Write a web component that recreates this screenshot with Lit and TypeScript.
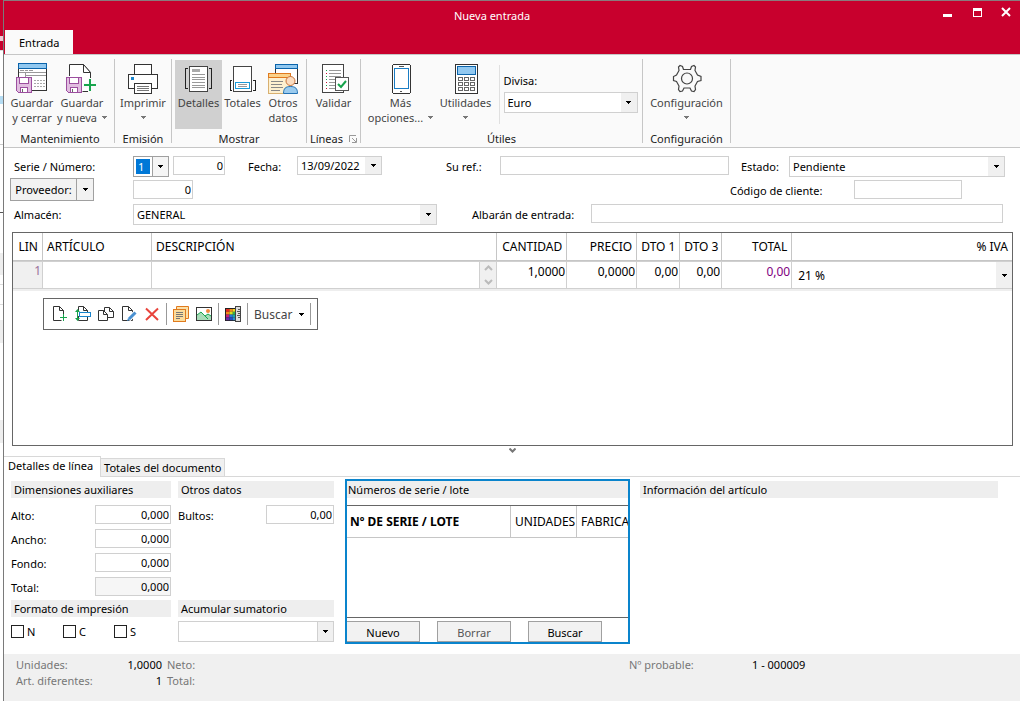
import { LitElement, html, css, svg } from "lit";
import { customElement, property } from "lit/decorators.js";

const base = css`
  * { box-sizing: border-box; }
  button, input, select { font: inherit; color: inherit; margin: 0; padding: 0; border-radius: 0; outline: none; }
  svg { display: block; flex: none; }
`;

const arrow = (fill = "#000") => svg`<svg width="5" height="3" shape-rendering="crispEdges"><path fill=${fill} d="M0 0h5v1H4v1H3v1H2V2H1V1H0z"/></svg>`;

const floppy = svg`
  <path d="M0.500 15.500h15v15h-13l-2-2z" fill="#e1bee0" stroke="#9c4f9f"/>
  <rect x="3.500" y="15.500" width="9" height="6" fill="#fff" stroke="#9c4f9f"/>
  <rect x="4.500" y="25.500" width="7" height="5" fill="#fff" stroke="#9c4f9f"/>
  <rect x="6" y="27" width="1" height="3" fill="#666"/>`;

const icons: Record<string, unknown> = {
  saveClose: svg`
    <rect x="2.500" y="1.500" width="28" height="27" fill="#fff" stroke="#333"/>
    <rect x="2.500" y="1.500" width="28" height="5" fill="#91c8f0" stroke="#0b64ab"/>
    <path d="M4 8.500h4m1 0h3m1 0h4M3 10.500h27M9.500 11v4M10 13.500h20" stroke="#999" fill="none"/>
    <path d="M18 18.500h2m1 0h2m1 0h2m1 0h2M18 21.500h2m1 0h2m1 0h2m1 0h2M18 24.500h2m1 0h2m1 0h2m1 0h2" stroke="#aaa"/>
    ${floppy}`,
  saveNew: svg`
    <path d="M3.500 14V2.500h14l7 8v19h-8" fill="#fff" stroke="#333" shape-rendering="auto"/>
    <path d="M17.500 2.500v8h7z" fill="#fff" stroke="#333" shape-rendering="auto"/>
    ${floppy}
    <path d="M24 16v14M17 23h14" stroke="#fafafa" stroke-width="5"/>
    <path d="M24 17v12M18 23h12" stroke="#17a44c" stroke-width="2"/>`,
  print: svg`
    <rect x="7.500" y="2.500" width="17" height="10" fill="#fff" stroke="#333"/>
    <rect x="1.500" y="12.500" width="29" height="14" rx="1" fill="#fff" stroke="#333"/>
    <rect x="4" y="15" width="3" height="3" fill="#1a84cc"/>
    <rect x="7.500" y="21.500" width="17" height="10" fill="#fff" stroke="#333"/>
    <path d="M10 24.500h12M10 26.500h12M10 28.500h12" stroke="#777"/>`,
  details: svg`
    <rect x="6.500" y="4.500" width="18" height="25" fill="#fff" stroke="#444"/>
    <path d="M5 6.500H2.500v20H5M26 6.500h2.500v20H26" fill="none" stroke="#222"/>
    <rect x="9" y="7" width="8" height="3" fill="#aaa"/>
    <path d="M9 12.500h13M9 15.500h13M9 17.500h13M9 20.500h13M9 23.500h13M9 25.500h13" stroke="#999"/>`,
  totals: svg`
    <rect x="6.500" y="4.500" width="18" height="25" fill="#fff" stroke="#444"/>
    <path d="M5 18.500H3.500v10H5M26 18.500h2.500v10H26" fill="none" stroke="#222"/>
    <rect x="8.500" y="20.500" width="14" height="6" fill="#fff" stroke="#1a9ad8"/>
    <path d="M11 22.500h9M11 24.500h9" stroke="#999"/>`,
  other: svg`
    <rect x="8.500" y="2.500" width="22" height="19" fill="#fff" stroke="#333"/>
    <rect x="8.500" y="2.500" width="22" height="4" fill="#91c8f0" stroke="#0b64ab"/>
    <rect x="1.500" y="11.500" width="22" height="20" fill="#fdf0d0" stroke="#d8b070"/>
    <rect x="1.500" y="11.500" width="22" height="4" fill="#fbd28a" stroke="#e07a1e"/>
    <path d="M4 19.500h12M4 22.500h11M4 25.500h12M4 28.500h9" stroke="#888"/>
    <path d="M16.500 31.500c0-5 2-7 7-7s7 2 7 7z" fill="#9bcbee" stroke="#2472b3" shape-rendering="auto"/>
    <circle cx="23.500" cy="19" r="4.500" fill="#fbdcc0" stroke="#c8743c" shape-rendering="auto"/>`,
  validate: svg`
    <rect x="4.500" y="2.500" width="21" height="28" fill="#fff" stroke="#444"/>
    <path d="M11 8.500h12M11 11.500h12M11 14.500h12M11 17.500h6M11 20.500h6M11 23.500h6M11 26.500h6" stroke="#999"/>
    <path d="M8 8.500h1M8 14.500h1M8 17.500h1M8 23.500h1" stroke="#17a44c"/>
    <path d="M8 11.500h1M8 20.500h1M8 26.500h1" stroke="#c8102e"/>
    <rect x="17.500" y="15.500" width="13" height="13" fill="#fff" stroke="#555"/>
    <path d="M20 22l3 3 5-6" fill="none" stroke="#17a44c" stroke-width="2" shape-rendering="auto"/>`,
  phone: svg`
    <rect x="7.500" y="2.500" width="18" height="29" rx="2" fill="#fff" stroke="#333"/>
    <rect x="9.500" y="6.500" width="14" height="20" fill="#fff" stroke="#1a7dc4"/>
    <path d="M14 4.500h5M15 29.500h2" stroke="#555"/>`,
  calc: svg`
    <rect x="5.500" y="2.500" width="22" height="29" fill="#fff" stroke="#333"/>
    <rect x="7.500" y="4.500" width="18" height="8" fill="#91c8f0" stroke="#0b64ab"/>
    ${[15.5, 20.5, 25.5].map((y) => [8.5, 14.5, 20.5].map((x) => svg`<rect x=${x} y=${y} width="4" height="3" fill="#fff" stroke="#666"/>`))}`,
  gear: svg`
    <g fill="none" stroke="#444" stroke-width="1.200" shape-rendering="auto">
      <path d="M12.500 7.500L11.500 4.500 9 3.500 7.500 5l.5 3.500L5.500 13 2.500 14.500v4L5.500 19.500 8 24l-.5 3.500L9 29.500l2.500-.500 1.500-3h6l1.500 3 2.500.500 1.500-2L24 24l2.500-4.500 3.500-1v-4L26.500 13 24 8.500l.5-3.500L23 3.500l-2.500 1-1 3z"/>
      <circle cx="16" cy="16.500" r="5.500"/>
    </g>`,
};

@customElement("combo-box")
class ComboBox extends LitElement {
  @property() value = "";
  @property() label = "";
  @property({ type: Boolean, reflect: true }) detached = false;
  @property({ type: Boolean, reflect: true }) picked = false;
  static styles = [base, css`
    :host { display: grid; grid-template-columns: minmax(0, 1fr) 16px; height: 21px; border: 1px solid #d0d0d0; background: #fff; }
    .field { grid-area: 1 / 1 / 2 / 3; width: 100%; min-width: 0; border: 0; background: none; appearance: none; padding: 0 18px 0 3px; }
    .arrow { grid-area: 1 / 2; background: #f0f0f0; display: grid; place-items: center; pointer-events: none; }
    :host([picked]) { border-color: #a0a0a0; }
    :host([picked]) .field { color: #fff; background: linear-gradient(#0078d7, #0078d7) 2px 2px / 14px 15px no-repeat; padding-left: 4px; }
    :host([picked]) .arrow { border-left: 1px solid #a0a0a0; background: #f5f5f5; }
    :host([detached]) .arrow { border-left: 1px solid #d0d0d0; }
  `];
  render() {
    return html`<select class="field" aria-label=${this.label}><option>${this.value}</option></select>
      <span class="arrow">${arrow()}</span>`;
  }
}

@customElement("ribbon-button")
class RibbonButton extends LitElement {
  @property() icon = "";
  @property() first = "";
  @property() second = "";
  @property({ type: Boolean }) menu = false;
  @property({ type: Boolean, reflect: true }) active = false;
  static styles = [base, css`
    :host { display: block; height: 69px; }
    .btn { width: 100%; height: 100%; border: 0; background: none; color: #444; line-height: 15px; display: flex; flex-direction: column; align-items: center; white-space: nowrap; }
    :host([active]) .btn { background: #d0d0d0; }
    .glyph { margin: 2px 0 1px; }
    .line { display: flex; align-items: center; gap: 5px; min-height: 15px; }
  `];
  render() {
    return html`<button class="btn" type="button" aria-pressed=${this.active}>
      <svg class="glyph" width="32" height="32" viewBox="0 0 32 32" shape-rendering="crispEdges">${icons[this.icon]}</svg>
      <span>${this.first}</span>
      <span class="line">${this.second ? html`<span>${this.second}</span>` : ""}${this.menu ? arrow("#777") : ""}</span>
    </button>`;
  }
}

@customElement("app-root")
class AppRoot extends LitElement {
  static styles = [base, css`
    :host { display: flex; min-height: 100vh; background: #fff; color: #000; font: 11px/15px "Noto Sans", "Open Sans", sans-serif; overflow: hidden; }
    .behind { width: 3px; flex: none; background: linear-gradient(#c8002d 36px, #f4c8d4 36px, #f4c8d4 41px, #c8002d 41px, #c8002d 50px, #ddd 50px, #ddd 51px, #fff 51px, #fff 96px, #b5dcf3 96px, #b5dcf3 104px, #fff 104px, #fff 144px, #ccc 144px, #ccc 145px, #fff 145px, #fff 212px, #555 212px, #555 213px, #fff 213px, #fff 253px, #eee 253px, #eee 275px, #fff 275px, #fff 284px, #ddd 284px, #ddd 285px, #fff 285px, #fff 304px, #ddd 304px, #ddd 305px, #fff 305px, #fff 320px, #eee 320px, #eee 343px, #fff 343px, #fff 420px, #eee 420px, #eee 443px, #fff 443px); }
    .window { flex: 1; min-width: 0; border-left: 1px solid #7a7a7a; border-top: 1px solid #8a7a7d; display: flex; flex-direction: column; }
    .title { height: 53px; background: #c8002d; color: #fff; display: grid; grid-template-columns: 1fr auto 1fr; padding-left: 1px; }
    .tab { align-self: end; justify-self: start; height: 24px; padding: 0 14px; background: #fafafa; color: #000; border: 0; }
    .caption { padding-top: 7px; margin-right: 41px; }
    .controls { justify-self: end; display: flex; height: 22px; }
    .controls button { width: 30px; border: 0; background: none; display: grid; place-items: center; }
    .controls button:last-child { width: 28px; }
    .ribbon { height: 94px; border-top: 1px solid #c6c6c6; border-bottom: 1px solid #c6c6c6; background: #fafafa; display: flex; padding: 4px 0; }
    .group { border-right: 1px solid #c6c6c6; display: flex; flex-direction: column; justify-content: space-between; align-items: center; color: #222; }
    .save { width: 111px; }
    .save .tools { align-self: flex-start; padding-left: 3px; }
    .save .foot { padding-left: 2px; }
    .emit { width: 57px; }
    .show { width: 135px; }
    .check { width: 54px; }
    .use { width: 282px; padding-left: 4px; }
    .use .foot { padding-right: 4px; }
    .setup { width: 88px; }
    .tools { display: flex; padding-top: 1px; }
    .w80 { width: 80px; }
    .w70 { width: 70px; }
    .w60 { width: 60px; }
    .w50 { width: 50px; }
    .w47 { width: 47px; }
    .w41 { width: 41px; }
    .w40 { width: 40px; }
    .foot { display: flex; align-items: center; gap: 6px; line-height: 9px; }
    .currency { border-left: 1px solid #e0e0e0; margin: 5px 0 5px 3px; padding: 8px 4px 0; display: grid; gap: 4px; align-content: start; width: 143px; color: #000; }

    .form { padding: 8px 15px 7px 6px; display: grid; gap: 3px; }
    .row { display: flex; align-items: flex-start; height: 21px; }
    .row label { line-height: 22px; flex: none; white-space: nowrap; }
    .lead { width: 123px; padding-left: 4px; }
    .box { height: 19px; border: 1px solid #d0d0d0; background: #fff; padding: 0 2px; min-width: 0; }
    .num { text-align: right; padding: 0 1px 1px; }
    .w36 { width: 36px; }
    .w52 { width: 52px; margin-left: 4px; }
    .row .date { width: 85px; height: 19px; }
    .lbl-date { width: 72px; padding-left: 23px; }
    .lbl-ref { width: 118px; padding-left: 64px; }
    .lbl-state { width: 60px; padding-left: 12px; }
    .state { flex: 1; }
    .ref { flex: 1; margin-right: 0; flex-basis: 15px; }
    .split { display: flex; height: 23px; width: 84px; flex: none; margin-top: -2px; }
    .split button { border: 1px solid #a0a0a0; background: #f2f2f2; }
    .split .main { flex: 1; }
    .split .drop { width: 17px; border-left: 0; display: grid; place-items: center; }
    .supplier { width: 60px; margin-left: 39px; }
    .lbl-code { margin-left: auto; width: 124px; }
    .code { width: 108px; margin-right: 43px; }
    .store { width: 304px; }
    .lbl-note { width: 154px; padding-left: 35px; }
    .note { flex: 1; margin-right: 2px; }

    .lines { border: 1px solid #666; margin: 0 7px 0 8px; flex: 1; min-height: 120px; }
    table { width: 100%; border-spacing: 0; table-layout: fixed; font-size: 12px; }
    .grid { border-bottom: 2px solid #eee; }
    .grid th { height: 28px; font-weight: 400; border-right: 1px solid #c6c6c6; border-bottom: 1px solid #c6c6c6; padding: 0 4px; text-align: right; white-space: nowrap; }
    .grid th.l { text-align: left; }
    .grid th:last-child { border-right: 0; }
    .grid td { height: 28px; border: 1px solid #d0d0d0; border-left-width: 0; padding: 0; vertical-align: top; }
    .grid td:last-child { border-right: 0; }
    .grid .no { background: #f0f0f0; color: #9a6f9a; text-align: right; padding: 1px; }
    .c-lin { width: 30px; }
    .c-art { width: 109px; }
    .c-num { width: 70px; }
    .c-dto { width: 43px; }
    .c-dto2 { width: 42px; }
    .c-iva { width: 22%; }
    .cell { width: 100%; height: 26px; border: 0; display: block; background: #fff; padding: 0 1px 8px; text-align: right; }
    .violet { color: #800080; }
    .desc { display: flex; }
    .spin { width: 17px; height: 26px; flex: none; background: #f0f0f0; border-left: 1px solid #d0d0d0; display: grid; place-items: center; }
    .grid combo-box { height: 26px; border: 0; padding-left: 3px; }
    .bar { width: 275px; height: 32px; margin: 7px 0 0 30px; border: 1px solid #666; display: flex; align-items: center; padding-left: 8px; gap: 7px; color: #444; font-size: 12px; }
    .bar button { border: 0; background: none; display: flex; align-items: center; gap: 7px; }
    .bar .icon { width: 16px; }
    .bar .sep { width: 1px; height: 22px; margin: 0 -1px; background: #999; }

    .fold { height: 10px; border: 0; background: none; display: grid; place-items: center; padding-bottom: 2px; }
    .tabs { display: flex; align-items: flex-end; height: 21px; }
    .tabs button { border: 1px solid #d8d8d8; border-left: 0; background: #f0f0f0; height: 19px; padding: 0 3px; white-space: nowrap; }
    .tabs .on { border-bottom: 0; background: #fff; height: 21px; padding: 0 7px 3px 4px; }
    .tabs .rest { flex: 1; border-bottom: 1px solid #d8d8d8; }
    .panels { display: grid; grid-template-columns: 160px 164px 295px minmax(0, 1fr); padding: 2px 22px 10px 7px; }
    .panel { display: grid; align-content: start; grid-auto-rows: min-content; padding-top: 2px; }
    .head { background: #eee; height: 17px; line-height: 18px; padding: 0 3px; margin: 0; font-size: 11px; font-weight: 400; white-space: nowrap; }
    .pair { display: flex; justify-content: space-between; height: 24px; }
    .pair label { line-height: 22px; }
    .pair .box { width: 76px; }
    .pairs { padding-top: 7px; height: 102px; }
    .second { padding: 2px 1px 0 7px; }
    .second .box { width: 68px; }
    .shade { background: #f6f6f6; }
    .checks { display: grid; grid-template-columns: 52px 51px 1fr; padding-top: 7px; }
    .checks label { display: flex; align-items: center; gap: 3px; }
    .checks input { appearance: none; width: 13px; height: 13px; border: 1px solid #222; background: #fff; }
    .sum { margin-top: 4px; }
    .serial { border: 2px solid #0a84cc; margin-left: 10px; height: 165px; display: flex; flex-direction: column; overflow: hidden; }
    .serial .head { padding: 0 1px; }
    .list { margin-top: 7px; border-top: 1px solid #666; border-bottom: 1px solid #666; height: 113px; }
    .list th { height: 32px; border-bottom: 1px solid #c6c6c6; border-right: 1px solid #c6c6c6; font-weight: 400; text-align: left; padding: 0 0 0 4px; white-space: nowrap; overflow: hidden; }
    .list th:first-child { font-weight: 700; width: 164px; padding-left: 3px; }
    .list th:nth-child(2) { width: 66px; }
    .list th:last-child { border-right: 0; }
    .acts { display: flex; gap: 17px; padding-top: 3px; margin-left: -1px; }
    .acts button { width: 74px; height: 21px; border: 1px solid #a0a0a0; background: #f2f2f2; padding-top: 2px; }
    .acts .off { color: #555; }
    .info { margin-left: 10px; }
    .status { background: #f0f0f0; height: 47px; padding: 3px 12px; color: #777; display: grid; grid-template-columns: 90px 56px 467px 123px 1fr; grid-auto-rows: 16px; align-content: start; }
    .status b { font-weight: 400; color: #000; }
    .status .r { text-align: right; }
    .status .gap { padding-left: 5px; }
  `];

  tool(name: string, body: unknown) {
    return html`<button class="icon" type="button" aria-label=${name}><svg width="16" height="16" viewBox="0 0 16 16" fill="none">${body}</svg></button>`;
  }

  size(name: string, id: string, value: string, shade = false) {
    return html`<div class="pair"><label for=${id}>${name}</label><input id=${id} class="box num ${shade ? "shade" : ""}" .value=${value}></div>`;
  }

  render() {
    const page = svg`<path d="M1.500 0.500h6l4 4v10h-10z" fill="#fff" stroke="#333"/><path d="M7.500 0.500v4h4" stroke="#333"/>`;
    const hues = ["#e8281e", "#f58a1e", "#f5d81e", "#f58a1e", "#d8e01e", "#38b048", "#c81e78", "#2878d8", "#20a8a0", "#6a28a8", "#2848c0", "#2890d0"];
    return html`
      <div class="behind"></div>
      <main class="window">
        <header class="title">
          <button class="tab" type="button">Entrada</button>
          <span class="caption">Nueva entrada</span>
          <div class="controls">
            <button type="button" aria-label="Minimizar"><svg width="9" height="10"><path d="M0 7h9v3H0z" fill="#fff"/></svg></button>
            <button type="button" aria-label="Maximizar"><svg width="9" height="9"><path fill-rule="evenodd" d="M0 0h9v9H0zM1 3v5h7V3z" fill="#fff"/></svg></button>
            <button type="button" aria-label="Cerrar"><svg width="10" height="10"><path d="M1 1l8 8M9 1l-8 8" stroke="#fff" stroke-width="2"/></svg></button>
          </div>
        </header>

        <nav class="ribbon">
          <section class="group save">
            <div class="tools">
              <ribbon-button class="w50" icon="saveClose" first="Guardar" second="y cerrar"></ribbon-button>
              <ribbon-button class="w50" icon="saveNew" first="Guardar" second="y nueva" menu></ribbon-button>
            </div>
            <span class="foot">Mantenimiento</span>
          </section>
          <section class="group emit">
            <div class="tools"><ribbon-button class="w50" icon="print" first="Imprimir" menu></ribbon-button></div>
            <span class="foot">Emisión</span>
          </section>
          <section class="group show">
            <div class="tools">
              <ribbon-button class="w47" active icon="details" first="Detalles"></ribbon-button>
              <ribbon-button class="w41" icon="totals" first="Totales"></ribbon-button>
              <ribbon-button class="w40" icon="other" first="Otros" second="datos"></ribbon-button>
            </div>
            <span class="foot">Mostrar</span>
          </section>
          <section class="group check">
            <div class="tools"><ribbon-button class="w50" icon="validate" first="Validar"></ribbon-button></div>
            <span class="foot">Líneas <svg width="8" height="8" fill="none" stroke="#999"><path d="M0.500 7V0.500H7M3 3l4 4M7.500 3v4.500H3"/></svg></span>
          </section>
          <section class="group use">
            <div class="tools">
              <ribbon-button class="w70" icon="phone" first="Más" second="opciones..." menu></ribbon-button>
              <ribbon-button class="w60" icon="calc" first="Utilidades" menu></ribbon-button>
              <div class="currency"><span>Divisa:</span><combo-box label="Divisa" value="Euro"></combo-box></div>
            </div>
            <span class="foot">Útiles</span>
          </section>
          <section class="group setup">
            <div class="tools"><ribbon-button class="w80" icon="gear" first="Configuración" menu></ribbon-button></div>
            <span class="foot">Configuración</span>
          </section>
        </nav>

        <form class="form">
          <div class="row">
            <label class="lead" for="numero">Serie / Número:</label>
            <combo-box class="w36" picked label="Serie" value="1"></combo-box>
            <input id="numero" class="box num w52" .value=${"0"}>
            <label class="lbl-date">Fecha:</label>
            <combo-box class="date" label="Fecha" value="13/09/2022"></combo-box>
            <label class="lbl-ref" for="ref">Su ref.:</label>
            <input id="ref" class="box ref">
            <label class="lbl-state">Estado:</label>
            <combo-box class="state" label="Estado" value="Pendiente"></combo-box>
          </div>
          <div class="row">
            <div class="split">
              <button class="main" type="button">Proveedor:</button>
              <button class="drop" type="button" aria-label="Elegir">${arrow()}</button>
            </div>
            <input class="box num supplier" aria-label="Proveedor" .value=${"0"}>
            <label class="lbl-code" for="codigo">Código de cliente:</label>
            <input id="codigo" class="box code">
          </div>
          <div class="row">
            <label class="lead">Almacén:</label>
            <combo-box class="store" label="Almacén" value="GENERAL"></combo-box>
            <label class="lbl-note" for="albaran">Albarán de entrada:</label>
            <input id="albaran" class="box note">
          </div>
        </form>

        <section class="lines">
          <table class="grid">
            <colgroup><col class="c-lin"><col class="c-art"><col><col class="c-num"><col class="c-num"><col class="c-dto"><col class="c-dto2"><col class="c-num"><col class="c-iva"></colgroup>
            <thead><tr>
              <th>LIN</th><th class="l">ARTÍCULO</th><th class="l">DESCRIPCIÓN</th><th>CANTIDAD</th><th>PRECIO</th><th>DTO 1</th><th>DTO 3</th><th>TOTAL</th><th>% IVA</th>
            </tr></thead>
            <tbody><tr>
              <td class="no">1</td>
              <td><input class="cell" aria-label="Artículo"></td>
              <td><div class="desc"><input class="cell" aria-label="Descripción">
                <span class="spin"><svg width="9" height="20" fill="none" stroke="#bbb" stroke-width="2"><path d="M1 5l3.500-3.500L8 5M1 15l3.500 3.500L8 15"/></svg></span></div></td>
              <td><input class="cell" aria-label="Cantidad" .value=${"1,0000"}></td>
              <td><input class="cell" aria-label="Precio" .value=${"0,0000"}></td>
              <td><input class="cell" aria-label="Dto 1" .value=${"0,00"}></td>
              <td><input class="cell" aria-label="Dto 3" .value=${"0,00"}></td>
              <td><input class="cell violet" aria-label="Total" .value=${"0,00"}></td>
              <td><combo-box label="IVA" value="21 %"></combo-box></td>
            </tr></tbody>
          </table>
          <div class="bar">
            ${this.tool("Nueva línea", svg`${page}<path d="M11 8v7M8 11.500h7" stroke="#fff" stroke-width="3"/><path d="M11.500 8v7M8 11.500h7" stroke="#17a44c"/>`)}
            ${this.tool("Insertar línea", svg`<path d="M3.500 5V0.500h5l4 4V14.500h-9V10" fill="#fff" stroke="#333"/><path d="M8.500 0.500v4h4" stroke="#333"/><rect x="4.500" y="6.500" width="11" height="4" fill="#fff" stroke="#1a84cc"/><path d="M2.500 4v9" stroke="#17a44c"/><path d="M0 6l2.500-3 2.500 3zM0 12l2.500 3 2.500-3z" fill="#17a44c"/>`)}
            ${this.tool("Duplicar", svg`<path d="M6.500 1.500h5l4 4v6h-9z" fill="#fff" stroke="#333"/><path d="M11.500 1.500v4h4" stroke="#333"/><path d="M0.500 4.500h5l4 4v6h-9z" fill="#fff" stroke="#333"/><path d="M5.500 4.500v4h4" stroke="#333"/>`)}
            ${this.tool("Modificar", svg`${page}<path d="M14.500 6.500l-7 7" stroke="#fff" stroke-width="5"/><path d="M14.500 6.500l-6.500 6.500" stroke="#4a90d0" stroke-width="3"/><path d="M6 15l1-3 2 2z" fill="#4a90d0"/>`)}
            ${this.tool("Borrar línea", svg`<path d="M2 2.500l12 11.500M14 2.500L2 14" stroke="#e8443c" stroke-width="2"/>`)}
            <span class="sep"></span>
            ${this.tool("Notas", svg`<path d="M3.500 3V0.500h12v12H12" fill="#fbe0a8" stroke="#e07a1e"/><rect x="0.500" y="3.500" width="12" height="12" fill="#fbdc9c" stroke="#e07a1e"/><path d="M3 6.500h7M3 8.500h7M3 10.500h7M3 12.500h4" stroke="#777"/>`)}
            ${this.tool("Imagen", svg`<rect x="0.500" y="1.500" width="15" height="13" fill="#fff" stroke="#333"/><path d="M1 9l4-3 4 4 3-2 3 2v4H1z" fill="#a8dcb8"/><path d="M1 9l4-3 7 7M9 10l3-2 3 2" stroke="#17a44c"/><circle cx="12" cy="5" r="2" fill="#f08a3c"/>`)}
            <span class="sep"></span>
            ${this.tool("Tallas y colores", svg`<rect x="0" y="2" width="12" height="13" fill="#222"/>${hues.map((h, i) => svg`<rect x=${1 + (i % 3) * 3.4} y=${3 + Math.floor(i / 3) * 2.8} width="3.400" height="2.800" fill=${h}/>`)}<rect x="10.500" y="0.500" width="5" height="15" fill="#ddd" stroke="#444"/><path d="M13 3.500h2M12 5.500h3M13 7.500h2M12 9.500h3M13 11.500h2" stroke="#555"/>`)}
            <span class="sep"></span>
            <button type="button">Buscar ${arrow()}</button>
            <span class="sep"></span>
          </div>
        </section>
        <button class="fold" type="button" aria-label="Plegar"><svg width="7" height="5" fill="none" stroke="#777" stroke-width="2"><path d="M0.500 0.500l3 3 3-3"/></svg></button>

        <div class="tabs">
          <button class="on" type="button">Detalles de línea</button>
          <button type="button">Totales del documento</button>
          <span class="rest"></span>
        </div>
        <section class="panels">
          <div class="panel">
            <h2 class="head">Dimensiones auxiliares</h2>
            <div class="pairs">
              ${this.size("Alto:", "alto", "0,000")}
              ${this.size("Ancho:", "ancho", "0,000")}
              ${this.size("Fondo:", "fondo", "0,000")}
              ${this.size("Total:", "total", "0,000", true)}
            </div>
            <h2 class="head">Formato de impresión</h2>
            <div class="checks">
              <label><input type="checkbox">N</label>
              <label><input type="checkbox">C</label>
              <label><input type="checkbox">S</label>
            </div>
          </div>
          <div class="panel second">
            <h2 class="head">Otros datos</h2>
            <div class="pairs">${this.size("Bultos:", "bultos", "0,00")}</div>
            <h2 class="head">Acumular sumatorio</h2>
            <combo-box class="sum" detached label="Acumular sumatorio" value=""></combo-box>
          </div>
          <div class="serial">
            <h2 class="head">Números de serie / lote</h2>
            <div class="list"><table><thead><tr><th>Nº DE SERIE / LOTE</th><th>UNIDADES</th><th>FABRICA</th></tr></thead></table></div>
            <div class="acts">
              <button type="button">Nuevo</button>
              <button type="button" class="off">Borrar</button>
              <button type="button">Buscar</button>
            </div>
          </div>
          <div class="panel info"><h2 class="head">Información del artículo</h2></div>
        </section>

        <footer class="status">
          <span>Unidades:</span><b class="r">1,0000</b><span class="gap">Neto:</span><span>Nº probable:</span><b>1 - 000009</b>
          <span>Art. diferentes:</span><b class="r">1</b><span class="gap">Total:</span>
        </footer>
      </main>`;
  }
}
